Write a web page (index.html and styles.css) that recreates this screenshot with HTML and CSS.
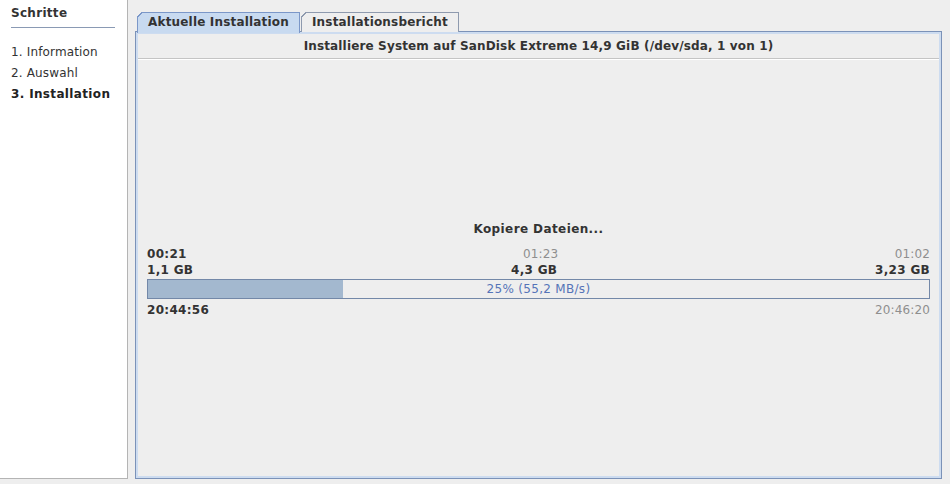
FILE: index.html
```html
<!DOCTYPE html>
<html>
<head>
<meta charset="utf-8">
<link rel="stylesheet" href="styles.css">
</head>
<body>
<div class="app">
  <aside class="sidebar">
    <div class="side-title">Schritte</div>
    <ul class="steps">
      <li>1. Information</li>
      <li>2. Auswahl</li>
      <li class="current">3. Installation</li>
    </ul>
  </aside>
  <main class="main">
    <div class="tabs">
      <div class="tab active">Aktuelle Installation</div>
      <div class="tab">Installationsbericht</div>
    </div>
    <section class="panel">
      <div class="panel-head">Installiere System auf SanDisk Extreme 14,9 GiB (/dev/sda, 1 von 1)</div>
      <div class="panel-body">
        <div class="status">Kopiere Dateien...</div>
        <div class="progress">
          <div class="row">
            <span class="strong">00:21</span>
            <span class="muted">01:23</span>
            <span class="muted">01:02</span>
          </div>
          <div class="row">
            <span class="strong">1,1 GB</span>
            <span class="strong">4,3 GB</span>
            <span class="strong">3,23 GB</span>
          </div>
          <div class="bar">
            <div class="fill" style="width:25%"></div>
            <div class="bar-label">25% (55,2 MB/s)</div>
          </div>
          <div class="row">
            <span class="strong">20:44:56</span>
            <span class="muted">20:46:20</span>
          </div>
        </div>
      </div>
    </section>
  </main>
</div>
</body>
</html>
```
FILE: styles.css
```css
* { box-sizing: border-box; }
html, body { margin: 0; padding: 0; }
body {
  background: #eeeeee;
  font-family: "DejaVu Sans", "Liberation Sans", sans-serif;
  font-size: 12px;
  letter-spacing: 0.15px;
  color: #333333;
  width: 950px;
  height: 484px;
  overflow: hidden;
}
.app {
  display: flex;
  align-items: flex-start;
  height: 484px;
}
.sidebar {
  width: 128px;
  height: 479px;
  background: #ffffff;
  border-right: 1px solid #b4b4b4;
  border-bottom: 1px solid #b4b4b4;
  padding: 5px 12px 0 11px;
}
.side-title {
  font-weight: bold;
  letter-spacing: 0.3px;
  line-height: 16px;
  padding-bottom: 6px;
  border-bottom: 1px solid #8a9ab4;
}
.steps {
  list-style: none;
  margin: 14px 0 0 0;
  padding: 0;
}
.steps li {
  line-height: 21px;
  color: #333;
}
.steps li.current { font-weight: bold; color: #222; letter-spacing: 0.35px; }
.main {
  margin-left: 7px;
  padding-top: 12px;
  width: 807px;
  display: flex;
  flex-direction: column;
}
.tabs {
  display: flex;
  padding-left: 2px;
  height: 20px;
  position: relative;
  z-index: 1;
}
.tab {
  position: relative;
  height: 20px;
  border: 1px solid #8e9aae;
  border-bottom: none;
  padding: 0 10px 0 10px;
  line-height: 18px;
  font-weight: bold;
  letter-spacing: 0.18px;
  color: #333;
  background: #eeeeee;
  margin-right: 1px;
}
.tab::before {
  content: "";
  position: absolute;
  left: -1px;
  top: -1px;
  width: 6px;
  height: 6px;
  background: linear-gradient(135deg, #eeeeee 0 3.2px, #8e9aae 3.2px 4.4px, transparent 4.4px);
}
.tab.active {
  background: #c8daf0;
  border-color: #7b97c8;
  height: 21px;
}
.tab.active::before {
  background: linear-gradient(135deg, #eeeeee 0 3.2px, #7b97c8 3.2px 4.4px, transparent 4.4px);
}
.panel {
  height: 448px;
  margin-top: -1px;
  border: 1px solid #7b92b8;
  box-shadow: inset 0 0 0 2px #cddcf0;
  padding: 2px;
  display: flex;
  flex-direction: column;
}
.panel-head {
  text-align: center;
  font-weight: bold;
  letter-spacing: 0.15px;
  line-height: 16px;
  padding: 4px 0 4px;
  border-bottom: 1px solid #c4c4c4;
  box-shadow: 0 1px 0 #ffffff;
}
.panel-body {
  padding: 162px 9px 0 9px;
  display: flex;
  flex-direction: column;
}
.status {
  text-align: center;
  font-weight: bold;
  letter-spacing: 0.4px;
  line-height: 16px;
  margin-bottom: 9px;
}
.progress {
  display: flex;
  flex-direction: column;
}
.row {
  display: flex;
  justify-content: space-between;
  line-height: 16px;
}
.strong { font-weight: bold; color: #333; letter-spacing: 0.3px; }
.muted { color: #8e8e8e; }
.bar {
  position: relative;
  height: 20px;
  margin: 1px 0 3px;
  border: 1px solid #7388a8;
  background: #eeeeee;
}
.fill {
  height: 100%;
  background: #a3b8cf;
}
.bar-label {
  position: absolute;
  inset: 0;
  text-align: center;
  line-height: 18px;
  color: #5574b8;
  letter-spacing: 0.3px;
}
```
